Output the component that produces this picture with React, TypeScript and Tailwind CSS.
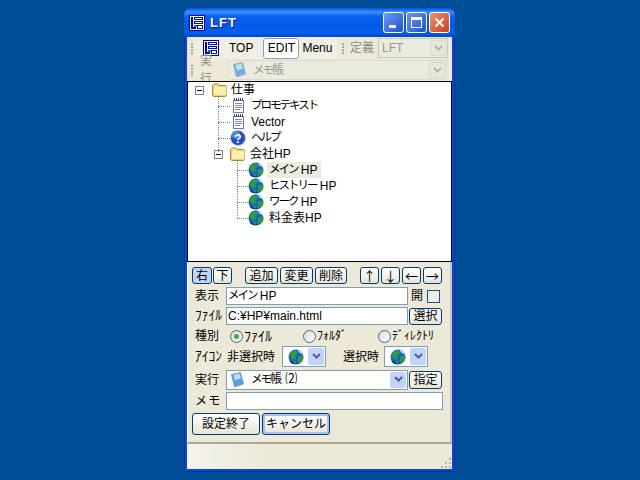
import type { ReactNode } from 'react';

const jp = "font-['Liberation_Sans','Noto_Sans_CJK_JP',sans-serif]";

function LogoIcon() {
  return (
    <svg width="16" height="16" viewBox="0 0 16 16" shapeRendering="crispEdges" className="shrink-0">
      <rect width="16" height="16" fill="#0000a8" />
      <rect x="1" y="1" width="14" height="14" fill="#fff" />
      <rect x="2" y="2" width="2" height="12" fill="#0000c8" />
      <rect x="4" y="12" width="3" height="2" fill="#0000c8" />
      <rect x="5" y="2" width="9" height="3" fill="#0000c8" />
      <rect x="6" y="3" width="7" height="1" fill="#fff" />
      <rect x="5" y="6" width="9" height="3" fill="#0000c8" />
      <rect x="6" y="7" width="7" height="1" fill="#fff" />
      <rect x="8" y="10" width="6" height="4" fill="#0000c8" />
      <rect x="9" y="11" width="4" height="2" fill="#fff" />
      <rect x="5" y="10" width="3" height="2" fill="#0b8f7a" />
    </svg>
  );
}

function FolderIcon() {
  return (
    <svg width="18" height="16" viewBox="0 0 18 16" className="shrink-0">
      <path d="M1.500 13V3.500l1.500-1.500h4l1.500 1.500h6l1 1V13l-1 1.500h-12z" fill="#f0cf6e" stroke="#a88a3a" />
      <path d="M3 7l1-2h11.500v8H3z" fill="#fdf0b0" />
      <path d="M2.500 4h5" stroke="#fff6cf" />
    </svg>
  );
}

function NoteIcon() {
  return (
    <svg width="16" height="16" viewBox="0 0 16 16" shapeRendering="crispEdges" className="shrink-0">
      <rect x="3.500" y="2.500" width="10" height="12" fill="#fff" stroke="#6b7aa8" />
      <path d="M4 0h1v3H4zM6 0h1v3H6zM8 0h1v3H8zM10 0h1v3h-1zM12 0h1v3h-1z" fill="#3b4a7a" />
      <path d="M5 5h7v1H5zM5 7h7v1H5zM5 9h7v1H5zM5 11h5v1H5z" fill="#8a8a8a" />
    </svg>
  );
}

function HelpIcon() {
  return (
    <svg width="16" height="16" viewBox="0 0 16 16" className="shrink-0">
      <circle cx="8" cy="8" r="7.500" fill="#1f50b8" stroke="#b8c4dc" />
      <circle cx="6" cy="5" r="4" fill="#4f86e0" />
      <text x="8" y="12.500" textAnchor="middle" fontSize="12" fontWeight="700" fill="#fff" fontFamily="Liberation Sans">?</text>
    </svg>
  );
}

function GlobeIcon() {
  return (
    <svg width="16" height="16" viewBox="0 0 16 16" className="shrink-0">
      <circle cx="8" cy="8" r="7.500" fill="#1a62c4" />
      <path d="M1.500 6C3 2.500 6 1 8.500 1.500L10 4 7.500 6 8 8.500 6 11 3.500 9z" fill="#2f9e3a" />
      <path d="M10 8l3.500-1.500L15.500 8l-1 4-3 2.500L10 12z" fill="#2f9e3a" />
      <path d="M10 1c3 .5 5 2.500 5.500 5L13 4.500 10.500 3z" fill="#a6d8f8" />
      <path d="M1.500 10.500C3 13 6 14.500 10 14c-2.500 2-6 1.500-8-1z" fill="#0f2f78" />
      <path d="M6 11.500l2 1.500v1.500H6z" fill="#2f9e3a" />
    </svg>
  );
}

function PadIcon({ dim = false }: { dim?: boolean }) {
  return (
    <svg width="15" height="16" viewBox="0 0 15 16" className={`shrink-0 ${dim ? 'opacity-80' : ''}`}>
      <path d="M1.500 2.500l9-2 3 11.500-9 3z" fill="#4e9fe6" stroke="#8aa0b8" />
      <path d="M3.500 3l6-1.500L11 6.500 5 8.500z" fill="#b5dcf7" />
    </svg>
  );
}

function Chevron({ color = '#4d6185' }: { color?: string }) {
  return (
    <svg width="9" height="7" viewBox="0 0 9 7">
      <path d="M1 1l3.500 3.500L8 1" fill="none" stroke={color} strokeWidth="2" />
    </svg>
  );
}

function DropBtn({ disabled = false }: { disabled?: boolean }) {
  return (
    <span
      className={`flex w-[16px] shrink-0 items-center justify-center self-stretch rounded-[2px] ${
        disabled ? 'border border-[#d9d8cc] bg-[#e8e7dc]' : 'bg-[#c1d3fb]'
      }`}
    >
      <Chevron color={disabled ? '#b5b4a8' : '#4d6185'} />
    </span>
  );
}

function Grip() {
  return (
    <div className="flex w-[3px] shrink-0 flex-col gap-[1px]">
      {[0, 1, 2, 3].map((i) => (
        <span key={i} className="h-[2px] w-[2px] bg-[#a8a798]" />
      ))}
    </div>
  );
}

// kana in the original UI font runs much narrower than Noto's full em
function Kana({ children }: { children: ReactNode }) {
  return <span className="text-[11.5px] tracking-[-2px]">{children}</span>;
}

function Btn({ w, h = 'h-[17px]', children, className = '' }: { w: string; h?: string; children: ReactNode; className?: string }) {
  return (
    <button
      className={`${w} ${h} ${className} flex shrink-0 items-center justify-center rounded-[3px] border border-[#003c74] bg-gradient-to-b from-white to-[#e6e4d8] text-[12px] leading-none text-black`}
    >
      {children}
    </button>
  );
}

function ArrowBtn({ children, className = '' }: { children: ReactNode; className?: string }) {
  return (
    <Btn w="w-[19px]" className={className}>
      <span className="font-['Noto_Sans_CJK_JP',sans-serif] text-[13px]">{children}</span>
    </Btn>
  );
}

function TreeRow({ icon, label, selected = false, pad, stub }: { icon: ReactNode; label: ReactNode; selected?: boolean; pad: string; stub: string }) {
  return (
    <div className={`flex h-[16px] items-center ${pad}`}>
      <span className={`h-0 shrink-0 border-t border-dotted border-[#808080] ${stub}`} />
      {icon}
      <span className={`ml-[3px] flex h-[16px] items-center whitespace-nowrap pl-[2px] pr-[3px] text-[12px] ${selected ? 'bg-[#ecebe0]' : ''}`}>{label}</span>
    </div>
  );
}

function Expander() {
  return (
    <span className="flex h-[9px] w-[9px] shrink-0 items-center justify-center border border-[#808080] bg-white">
      <span className="h-px w-[5px] bg-black" />
    </span>
  );
}

function Radio({ label, size, checked = false, w }: { label: string; size: string; checked?: boolean; w: string }) {
  return (
    <div className={`flex items-center ${w}`}>
      <span className="flex h-[13px] w-[13px] shrink-0 items-center justify-center rounded-full border border-[#3e6a96] bg-gradient-to-br from-[#dcdcd2] to-white">
        {checked && <span className="h-[5px] w-[5px] rounded-full bg-[#3fb03f]" />}
      </span>
      <span className={`ml-[1px] whitespace-nowrap leading-none ${size}`}>{label}</span>
    </div>
  );
}

function IconCombo() {
  return (
    <div className="flex h-[21px] w-[44px] shrink-0 items-stretch border border-[#7f9db9] bg-white p-[1px]">
      <span className="flex flex-1 items-center justify-center"><GlobeIcon /></span>
      <DropBtn />
    </div>
  );
}

export default function App() {
  return (
    <div className={`h-[480px] w-[640px] overflow-hidden bg-[#004e98] pl-[184px] pt-[8px] text-black ${jp}`}>
      <div className="flex h-[464px] w-[271px] flex-col overflow-hidden rounded-t-[7px] bg-[#0a46d8] shadow-[inset_1px_0_#0831a8,inset_-1px_0_#0831a8,inset_0_-1px_#0831a8]">
        {/* title bar */}
        <div className="flex h-[29px] shrink-0 items-center bg-[linear-gradient(180deg,#0a4fd0_0%,#1f78f5_8%,#3a90ff_14%,#0a62ee_28%,#0058e6_60%,#0460ee_85%,#0046c8_100%)] pl-[5px] pr-[5px]">
          <LogoIcon />
          <span className="ml-[5px] text-[13px] font-bold tracking-[1px] text-white [text-shadow:1px_1px_#0f1089]">LFT</span>
          <div className="ml-auto flex gap-[2px]">
            <span className="flex h-[21px] w-[21px] items-end rounded-[3px] border border-white bg-gradient-to-br from-[#6f98f4] to-[#1f4fcf] pb-[4px] pl-[5px]">
              <span className="h-[3px] w-[7px] bg-white" />
            </span>
            <span className="flex h-[21px] w-[21px] items-center justify-center rounded-[3px] border border-white bg-gradient-to-br from-[#6f98f4] to-[#1f4fcf]">
              <span className="h-[11px] w-[11px] border border-t-[3px] border-white" />
            </span>
            <span className="flex h-[21px] w-[21px] items-center justify-center rounded-[3px] border border-white bg-gradient-to-br from-[#e89070] to-[#c8401c]">
              <svg width="11" height="11" viewBox="0 0 11 11">
                <path d="M1.500 1.500l8 8M9.500 1.500l-8 8" stroke="#fff" strokeWidth="2" />
              </svg>
            </span>
          </div>
        </div>

        {/* client */}
        <div className="mx-[3px] flex min-h-0 flex-1 flex-col bg-[#ece9d8]">
          {/* toolbars */}
          <div className="flex h-[22px] shrink-0 items-center pl-[4px] pr-[5px]">
            <Grip />
            <div className="ml-[2px] flex h-[22px] w-[141px] shrink-0 items-center bg-[#f1efe5]">
              <span className="ml-[7px]"><LogoIcon /></span>
              <span className="ml-[10px] text-[12px]">TOP</span>
              <span className="ml-[10px] flex h-[21px] w-[36px] items-center justify-center rounded-[3px] border border-[#8aa4c0] bg-white text-[12px]">EDIT</span>
              <span className="ml-[3px] text-[12px]">Menu</span>
            </div>
            <span className="ml-[5px]"><Grip /></span>
            <span className="ml-[5px] shrink-0 whitespace-nowrap text-[12px] text-[#8e8d80]">定義</span>
            <div className="ml-[4px] flex h-[20px] w-[70px] shrink-0 items-stretch border border-[#c9c7ba] bg-[#ebeadf] p-[1px]">
              <span className="flex-1 pl-[2px] text-[12px] leading-[16px] text-[#9c9b90]">LFT</span>
              <DropBtn disabled />
            </div>
          </div>
          <div className="flex h-[22px] shrink-0 items-center pl-[4px] pr-[5px]">
            <Grip />
            <span className="ml-[6px] text-[12px] text-[#8e8d80]">実行</span>
            <div className="ml-[4px] flex h-[20px] w-[220px] items-stretch border border-[#dcdbd0] bg-[#ebeadf] p-[1px]">
              <span className="flex flex-1 items-center gap-[6px] pl-[2px] text-[12px] text-[#9c9b90]"><PadIcon dim /><span><Kana>メモ</Kana>帳</span></span>
              <DropBtn disabled />
            </div>
          </div>

          {/* tree */}
          <div className="relative h-[181px] shrink-0 border border-black bg-white text-[12px]">
            <span className="absolute left-[30px] top-[15px] h-[55px] w-0 border-l border-dotted border-[#808080]" />
            <span className="absolute left-[49px] top-[78px] h-[58px] w-0 border-l border-dotted border-[#808080]" />
            <div className="flex h-[16px] items-center pl-[7px]">
              <Expander />
              <span className="ml-[7px]"><FolderIcon /></span>
              <span className="ml-[2px] text-[12px] leading-[16px]">仕事</span>
            </div>
            <TreeRow pad="pl-[30px]" stub="w-[12px]" icon={<NoteIcon />} label={<Kana>プロモテキスト</Kana>} />
            <TreeRow pad="pl-[30px]" stub="w-[12px]" icon={<NoteIcon />} label="Vector" />
            <TreeRow pad="pl-[30px]" stub="w-[12px]" icon={<HelpIcon />} label={<Kana>ヘルプ</Kana>} />
            <div className="flex h-[16px] items-center pl-[26px]">
              <Expander />
              <span className="ml-[6px]"><FolderIcon /></span>
              <span className="ml-[3px] text-[12px] leading-[16px]">会社HP</span>
            </div>
            <TreeRow pad="pl-[49px]" stub="w-[11px]" icon={<GlobeIcon />} label={<><Kana>メイン</Kana>&nbsp;HP</>} selected />
            <TreeRow pad="pl-[49px]" stub="w-[11px]" icon={<GlobeIcon />} label={<><Kana>ヒストリー</Kana>&nbsp;HP</>} />
            <TreeRow pad="pl-[49px]" stub="w-[11px]" icon={<GlobeIcon />} label={<><Kana>ワーク</Kana>&nbsp;HP</>} />
            <TreeRow pad="pl-[49px]" stub="w-[11px]" icon={<GlobeIcon />} label="料金表HP" />
          </div>

          {/* edit panel */}
          <div className="flex min-h-0 flex-1 flex-col border-b-2 border-l border-r-2 border-b-[#a9a795] border-l-white border-r-[#c8c6b5] pl-[4px] pt-[5px]">
            <div className="flex h-[17px] items-center">
              <Btn w="w-[20px]" className="!bg-none !bg-[#c1d3fb]">右</Btn>
              <Btn w="w-[19px]" className="ml-[1px]">下</Btn>
              <Btn w="w-[33px]" className="ml-[13px]">追加</Btn>
              <Btn w="w-[33px]" className="ml-[2px]">変更</Btn>
              <Btn w="w-[32px]" className="ml-[2px]">削除</Btn>
              <ArrowBtn className="ml-[13px]">↑</ArrowBtn>
              <ArrowBtn className="ml-[2px]">↓</ArrowBtn>
              <ArrowBtn className="ml-[2px]">←</ArrowBtn>
              <ArrowBtn className="ml-[2px]">→</ArrowBtn>
            </div>

            <div className="mt-[3px] flex h-[18px] items-center">
              <span className="w-[34px] pl-[3px] text-[12px]">表示</span>
              <div className="flex h-[18px] w-[182px] items-center border border-[#7f9db9] bg-white pl-[1px] text-[12px]"><Kana>メイン</Kana>&nbsp;HP</div>
              <span className="ml-[3px] text-[12px]">開</span>
              <span className="ml-[4px] h-[13px] w-[13px] border border-[#1c5180] bg-[#ecebe4]" />
            </div>

            <div className="mt-[2px] flex h-[18px] items-center">
              <span className="w-[34px] whitespace-nowrap pl-[3px] text-[13.5px] leading-none">ﾌｧｲﾙ</span>
              <div className="flex h-[18px] w-[182px] items-center border border-[#7f9db9] bg-white pl-[1px] text-[12px]">C:¥HP¥main.html</div>
              <Btn w="w-[33px]" className="ml-[1px]">選択</Btn>
            </div>

            <div className="mt-[2px] flex h-[18px] items-center">
              <span className="w-[38px] pl-[3px] text-[12px]">種別</span>
              <Radio w="w-[73px]" size="text-[14px]" label="ﾌｧｲﾙ" checked />
              <Radio w="w-[75px]" size="text-[12px]" label="ﾌｫﾙﾀﾞ" />
              <Radio w="w-[62px]" size="text-[12px]" label="ﾃﾞｨﾚｸﾄﾘ" />
            </div>

            <div className="mt-[1px] flex h-[21px] items-center">
              <span className="w-[34px] whitespace-nowrap pl-[3px] text-[13.5px] leading-none">ｱｲｺﾝ</span>
              <span className="w-[56px] whitespace-nowrap pl-[1px] text-[12px]">非選択時</span>
              <IconCombo />
              <span className="ml-[17px] w-[41px] whitespace-nowrap text-[12px]">選択時</span>
              <IconCombo />
            </div>

            <div className="mt-[2px] flex h-[21px] items-center">
              <span className="w-[34px] pl-[3px] text-[12px]">実行</span>
              <div className="flex h-[20px] w-[182px] items-stretch border border-[#7f9db9] bg-white p-[1px]">
                <span className="flex flex-1 items-center gap-[6px] pl-[2px] text-[12px]"><PadIcon /><span><Kana>メモ</Kana>帳 ⑵</span></span>
                <DropBtn />
              </div>
              <Btn w="w-[33px]" h="h-[18px]" className="ml-[1px]">指定</Btn>
            </div>

            <div className="mt-[2px] flex h-[18px] items-center">
              <span className="w-[34px] whitespace-nowrap pl-[3px] text-[12px] tracking-[-1px]">メ モ</span>
              <div className="h-[18px] w-[217px] border border-[#7f9db9] bg-white" />
            </div>

            <div className="mt-[3px] flex">
              <Btn w="w-[68px]" h="h-[22px]">設定終了</Btn>
              <Btn w="w-[68px]" h="h-[22px]" className="ml-[2px] shadow-[inset_0_0_0_2px_#a8c0f0]">キャンセル</Btn>
            </div>
          </div>

          {/* status bar */}
          <div className="relative flex h-[25px] shrink-0 justify-end bg-gradient-to-r from-[#f4f3ec] to-[#ece9d8] to-[30%]">
            <svg width="12" height="12" viewBox="0 0 12 12" shapeRendering="crispEdges" className="self-end">
              <path d="M9 1h2v2H9zM5 5h2v2H5zM9 5h2v2H9zM1 9h2v2H1zM5 9h2v2H5zM9 9h2v2H9z" fill="#b8b5a4" />
            </svg>
          </div>
        </div>
        <div className="h-[3px] shrink-0" />
      </div>
    </div>
  );
}
